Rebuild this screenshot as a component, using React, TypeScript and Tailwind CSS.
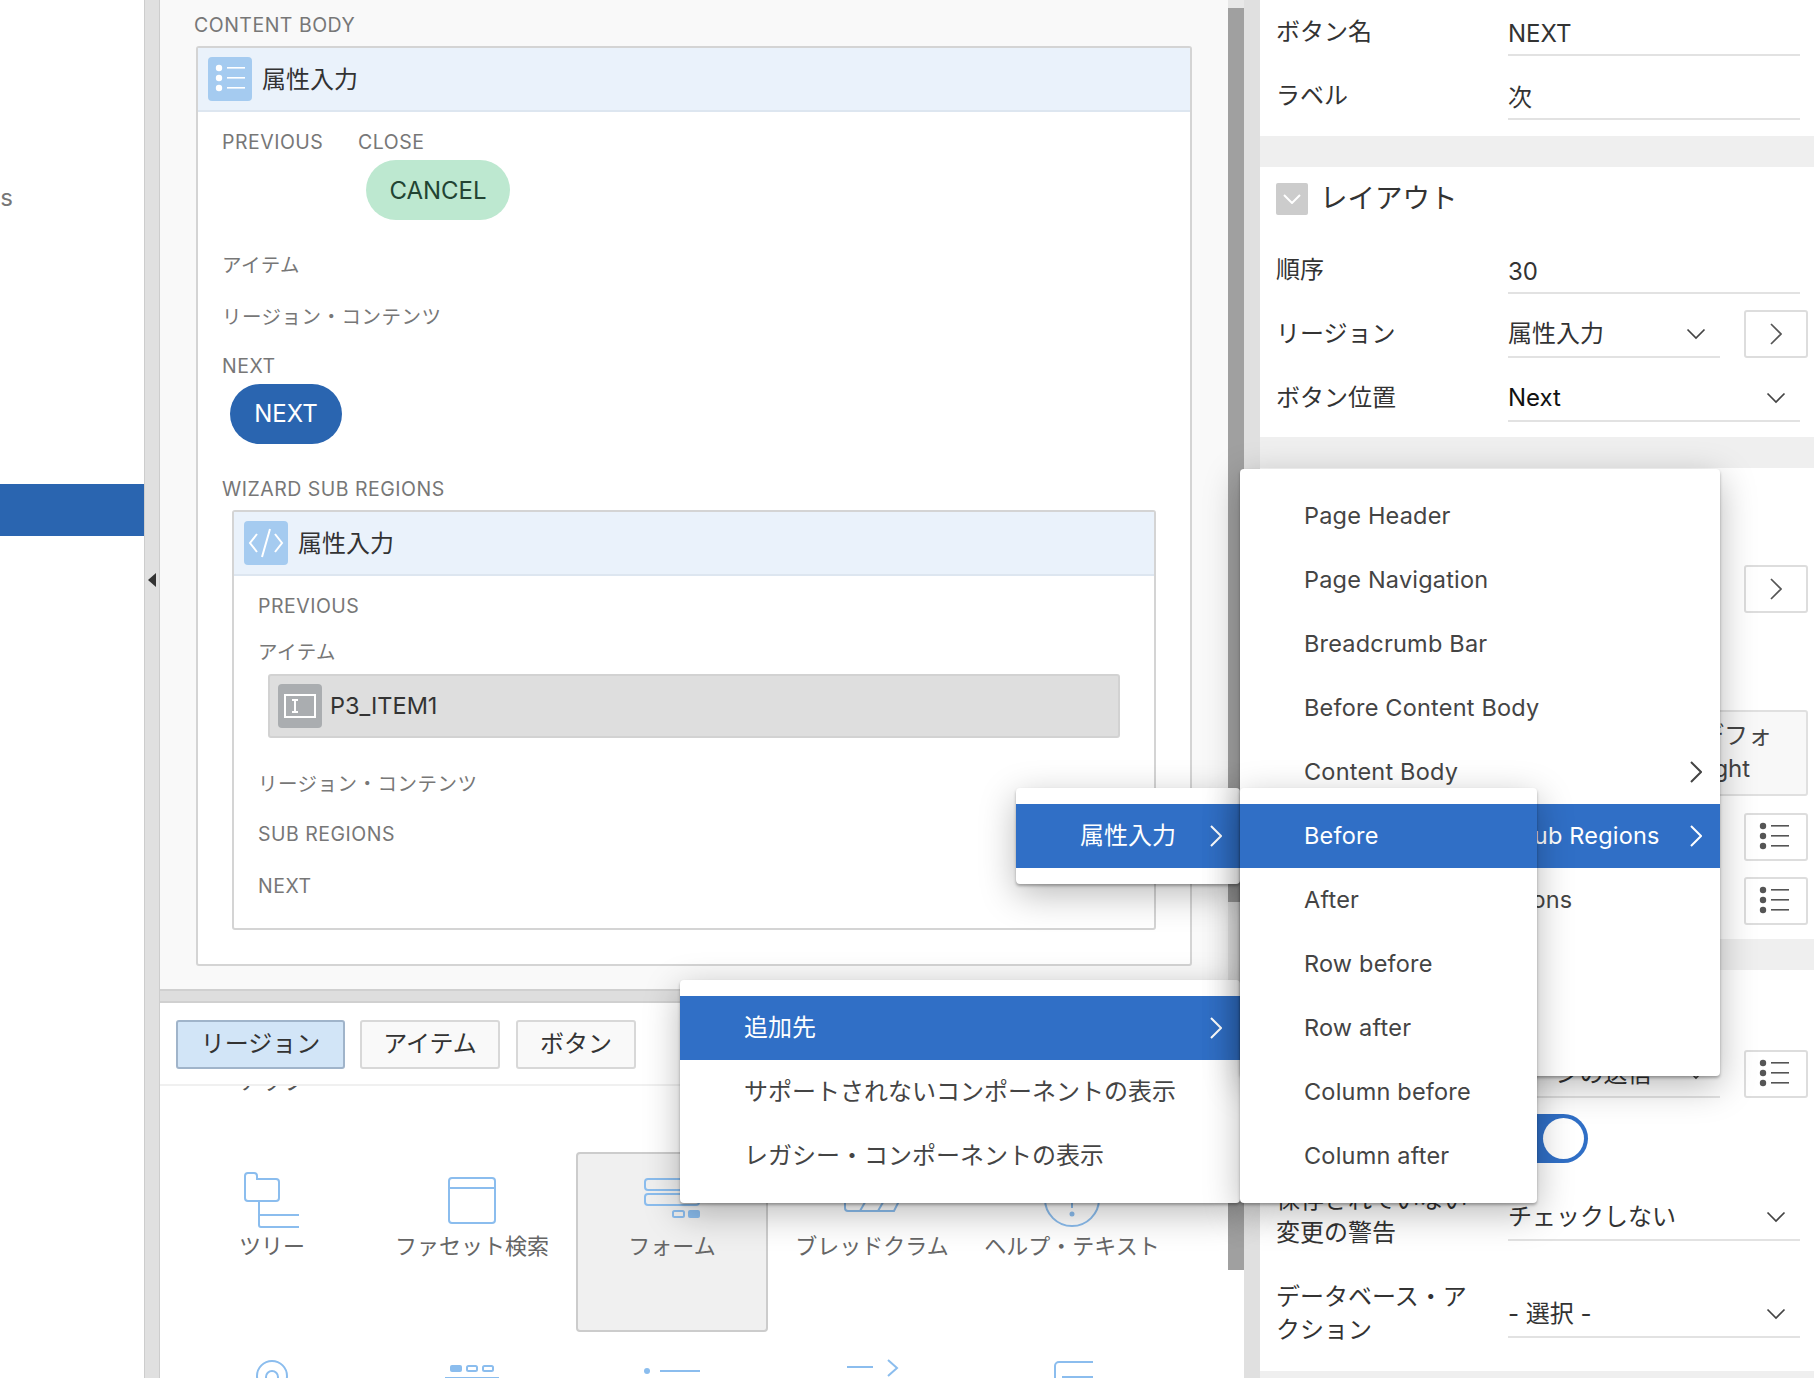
import React from 'react';

const Chev = ({ c = '#555', w = 2 }: { c?: string; w?: number }) => (
  <svg width="12" height="22" viewBox="0 0 12 22" fill="none" stroke={c} strokeWidth={w}>
    <path d="M1 1 L11 11 L1 21" />
  </svg>
);

const ChevDown = ({ c = '#444' }: { c?: string }) => (
  <svg width="20" height="12" viewBox="0 0 20 12" fill="none" stroke={c} strokeWidth="1.7">
    <path d="M1.5 1.5 L10 10 L18.5 1.5" />
  </svg>
);

const ListGlyph = ({ c = '#555' }: { c?: string }) => (
  <svg width="44" height="44" viewBox="0 0 44 44" fill={c} stroke="none">
    <circle cx="11" cy="11" r="3.2" />
    <circle cx="11" cy="21" r="3.2" />
    <circle cx="11" cy="31" r="3.2" />
    <rect x="19" y="10" width="18" height="1.6" />
    <rect x="19" y="20" width="18" height="1.6" />
    <rect x="19" y="30" width="18" height="1.6" />
  </svg>
);

const Lbl = ({ children, className = '' }: { children: React.ReactNode; className?: string }) => (
  <div className={`h-[24px] pt-[1px] leading-[24px] text-[19.5px] tracking-[0.5px] text-[#777] whitespace-nowrap ${className}`}>{children}</div>
);

const RegionHead = ({ icon, title }: { icon: React.ReactNode; title: string }) => (
  <div className="h-[64px] bg-[#eaf2fb] border-b-2 border-[#dde6f0] flex items-center pl-[10px]">
    <div className="w-[44px] h-[44px] rounded-[4px] bg-[#a5cbf0] flex items-center justify-center">{icon}</div>
    <span className="ml-[10px] pt-[2px] text-[24px] text-[#333]">{title}</span>
  </div>
);

const Field = ({ label, children, h = 'h-[64px]', w = 'w-[292px]', dark = false, arrow = false, btn }: { label?: React.ReactNode; children?: React.ReactNode; h?: string; w?: string; dark?: boolean; arrow?: boolean; btn?: React.ReactNode }) => (
  <div className={`${h} shrink-0 flex items-end pl-[16px]`}>
    <div className="w-[232px] h-[48px] pb-[2px] flex items-center text-[24px] leading-[33px] text-[#333] whitespace-nowrap">{label}</div>
    <div className={`${w} h-[48px] border-b-2 border-[#e2e2e2] flex items-center justify-between text-[24px] ${arrow ? 'pt-[2px]' : 'pt-[5px]'} ${dark ? 'text-[#111]' : 'text-[#333]'}`}>
      <span>{children}</span>
      {arrow && <span className="mr-[14px] flex"><ChevDown /></span>}
    </div>
    {btn}
  </div>
);

const SideBtn = ({ children, className = '' }: { children: React.ReactNode; className?: string }) => (
  <div className={`w-[64px] h-[48px] bg-white border-2 border-[#ddd] rounded-[3px] flex items-center justify-center ${className}`}>{children}</div>
);

const ListBtn = ({ className = '' }: { className?: string }) => (
  <SideBtn className={className}>
    <span className="flex -translate-x-[2px]"><ListGlyph /></span>
  </SideBtn>
);

const Menu = ({ items, className }: { items: { t: string; on?: boolean; sub?: boolean; ja?: boolean }[]; className: string }) => (
  <div className={`absolute bg-white rounded-[4px] shadow-[0_2px_3px_rgba(0,0,0,0.3),0_10px_36px_rgba(0,0,0,0.28)] ${className}`}>
    {items.map((it) => (
      <div key={it.t} className={`h-[64px] flex items-center justify-between whitespace-nowrap ${it.on ? 'bg-[#306fc6] text-white' : 'text-[#444]'}`}>
        <span className={it.ja ? 'text-[24px]' : 'text-[23.5px] tracking-[0.2px]'}>{it.t}</span>
        {it.sub && <span className="flex"><Chev c={it.on ? '#fff' : '#444'} /></span>}
      </div>
    ))}
  </div>
);

const stroke = '#8bbdee';

const TreeIcon = () => (
  <svg width="60" height="56" viewBox="0 0 60 56" fill="none" stroke={stroke} strokeWidth="2" overflow="visible">
    <path d="M3 4 a3 3 0 0 1 3-3 h6 a3 3 0 0 1 3 3 v3 h19 a3 3 0 0 1 3 3 v16 a3 3 0 0 1-3 3 h-28 a3 3 0 0 1-3-3 z" />
    <path d="M17 29 v24 a2 2 0 0 0 2 2 h38 M17 43 h40" />
  </svg>
);

const FacetIcon = () => (
  <svg width="60" height="56" viewBox="0 0 60 56" fill="none" stroke={stroke} strokeWidth="2" overflow="visible">
    <rect x="7" y="6" width="46" height="45" rx="3" />
    <path d="M7 16 h46" />
  </svg>
);

const FormIcon = () => (
  <svg width="60" height="56" viewBox="0 0 60 56" fill="none" stroke={stroke} strokeWidth="2" overflow="visible">
    <rect x="3" y="7" width="54" height="11" rx="3" />
    <rect x="3" y="22" width="54" height="11" rx="3" />
    <rect x="31" y="39" width="11" height="6" rx="1.5" />
    <rect x="46" y="38" width="12" height="8" rx="2" fill={stroke} stroke="none" />
  </svg>
);

const CrumbIcon = () => (
  <svg width="60" height="56" viewBox="0 0 60 56" fill="none" stroke={stroke} strokeWidth="2" overflow="visible">
    <path d="M3 22 v14 a3 3 0 0 0 3 3 h46 l6-12 M18 39 l8-14 M36 39 l8-14" />
  </svg>
);

const HelpIcon = () => (
  <svg width="60" height="56" viewBox="0 0 60 56" fill="none" stroke={stroke} strokeWidth="2" overflow="visible">
    <circle cx="30" cy="27" r="27" />
    <path d="M30 31 v5" />
    <circle cx="30" cy="42" r="1.5" fill={stroke} />
  </svg>
);

const TargetIcon = () => (
  <svg width="60" height="56" viewBox="0 0 60 56" fill="none" stroke={stroke} strokeWidth="2" overflow="visible">
    <circle cx="30" cy="16" r="15" />
    <circle cx="30" cy="17" r="6" />
  </svg>
);

const TabsIcon = () => (
  <svg width="60" height="56" viewBox="0 0 60 56" fill="none" stroke={stroke} strokeWidth="2" overflow="visible">
    <rect x="8" y="5" width="12" height="7" rx="2" fill={stroke} stroke="none" />
    <rect x="25" y="6" width="10" height="5" rx="1.5" />
    <rect x="41" y="6" width="10" height="5" rx="1.5" />
    <path d="M3 18 h54" />
  </svg>
);

const DotLineIcon = () => (
  <svg width="60" height="56" viewBox="0 0 60 56" fill="none" stroke={stroke} strokeWidth="2" overflow="visible">
    <circle cx="5" cy="11" r="3" fill={stroke} stroke="none" />
    <path d="M18 11 h40" />
  </svg>
);

const NextIcon = () => (
  <svg width="60" height="56" viewBox="0 0 60 56" fill="none" stroke={stroke} strokeWidth="2" overflow="visible">
    <path d="M5 7 h26 M46 0 l9 8 l-9 8" />
  </svg>
);

const CardIcon = () => (
  <svg width="60" height="56" viewBox="0 0 60 56" fill="none" stroke={stroke} strokeWidth="2" overflow="visible">
    <path d="M13 20 v-14 a4 4 0 0 1 4-4 h34 M20 17 h31" />
  </svg>
);

const cells = [
  { t: 'ツリー', icon: <TreeIcon /> },
  { t: 'ファセット検索', icon: <FacetIcon /> },
  { t: 'フォーム', icon: <FormIcon />, on: true },
  { t: 'ブレッドクラム', icon: <CrumbIcon /> },
  { t: 'ヘルプ・テキスト', icon: <HelpIcon /> },
  { t: '', icon: <TargetIcon /> },
  { t: '', icon: <TabsIcon /> },
  { t: '', icon: <DotLineIcon /> },
  { t: '', icon: <NextIcon /> },
  { t: '', icon: <CardIcon /> },
];

export default function App() {
  return (
    <div className="relative w-[1814px] h-[1378px] overflow-hidden flex bg-white font-[Inter,'Noto_Sans_CJK_JP',sans-serif]">
      {/* left nav */}
      <div className="w-[144px] shrink-0 overflow-hidden">
        <div className="mt-[182px] h-[32px] leading-[32px] -ml-[67px] w-[80px] text-right text-[24px] text-[#777]">Items</div>
        <div className="mt-[270px] h-[52px] bg-[#2a65b0]" />
      </div>
      <div className="w-[16px] shrink-0 bg-[#e0e0e0] border-x border-[#cdcdcd] flex items-start justify-center">
        <div className="mt-[573px] w-0 h-0 border-y-[7px] border-y-transparent border-r-[8px] border-r-[#333]" />
      </div>

      {/* center */}
      <div className="w-[1084px] shrink-0 flex flex-col">
        <div className="h-[989px] flex">
          <div className="w-[1068px] bg-[#f9f9f9] pt-[12px]">
            <Lbl className="ml-[34px]">CONTENT BODY</Lbl>
            <div className="mt-[10px] ml-[36px] w-[996px] h-[920px] border-2 border-[#d4d4d4] rounded-[3px] bg-white">
              <RegionHead
                title="属性入力"
                icon={<ListGlyph c="#fff" />}
              />
              <div className="pl-[24px] pt-[17px]">
                <div className="flex">
                  <Lbl className="w-[136px]">PREVIOUS</Lbl>
                  <div>
                    <Lbl>CLOSE</Lbl>
                    <div className="mt-[7px] ml-[8px] w-[144px] h-[60px] pt-[1px] rounded-full bg-[#bde8d0] flex items-center justify-center text-[24px] text-[#243]">CANCEL</div>
                  </div>
                </div>
                <Lbl className="mt-[32px]">アイテム</Lbl>
                <Lbl className="mt-[28px]">リージョン・コンテンツ</Lbl>
                <Lbl className="mt-[25px]">NEXT</Lbl>
                <div className="mt-[7px] ml-[8px] w-[112px] h-[60px] rounded-full bg-[#2a65b0] flex items-center justify-center text-[24px] text-white">NEXT</div>
                <Lbl className="mt-[32px]">WIZARD SUB REGIONS</Lbl>
                <div className="mt-[10px] ml-[10px] w-[924px] h-[420px] border-2 border-[#d4d4d4] rounded-[3px] bg-white">
                  <RegionHead
                    title="属性入力"
                    icon={
                      <svg width="44" height="44" viewBox="0 0 44 44" fill="none" stroke="#fff" strokeWidth="2">
                        <path d="M13 13 L6 22 L13 31 M31 13 L38 22 L31 31 M26 8 L18 36" />
                      </svg>
                    }
                  />
                  <div className="pl-[24px] pt-[17px]">
                    <Lbl>PREVIOUS</Lbl>
                    <Lbl className="mt-[22px]">アイテム</Lbl>
                    <div className="mt-[11px] ml-[10px] w-[852px] h-[64px] bg-[#dedede] border-2 border-[#d2d2d2] rounded-[3px] flex items-center pl-[8px]">
                      <div className="w-[44px] h-[44px] rounded-[4px] bg-[#aaadb0] flex items-center justify-center">
                        <svg width="32" height="24" viewBox="0 0 32 24" fill="none" stroke="#fff" strokeWidth="2">
                          <rect x="1" y="1" width="30" height="22" />
                          <path d="M8 6 h6 M8 18 h6 M11 6 v12" />
                        </svg>
                      </div>
                      <span className="ml-[8px] text-[23.5px] text-[#333]">P3_ITEM1</span>
                    </div>
                    <Lbl className="mt-[33px]">リージョン・コンテンツ</Lbl>
                    <Lbl className="mt-[26px]">SUB REGIONS</Lbl>
                    <Lbl className="mt-[28px]">NEXT</Lbl>
                  </div>
                </div>
              </div>
            </div>
          </div>
          <div className="w-[16px] bg-[#e8e8e8] pt-[8px]">
            <div className="h-[894px] bg-[#a0a0a0]" />
          </div>
        </div>

        <div className="h-[14px] bg-[#dedede] border-y-2 border-[#d0d0d0]" />

        <div className="flex-1 flex overflow-hidden">
          <div className="w-[1068px] overflow-hidden">
            <div className="h-[83px] border-b-2 border-[#f0f0f0] flex items-start pt-[17px] pl-[16px] text-[24px] text-[#333]">
              <div className="w-[169px] h-[49px] pb-[2px] rounded-[3px] bg-[#d2e5f7] border-2 border-[#a0b4ca] flex items-center justify-center">リージョン</div>
              <div className="ml-[15px] w-[140px] h-[49px] pb-[2px] rounded-[3px] bg-[#f9f9f9] border-2 border-[#d8d8d8] flex items-center justify-center">アイテム</div>
              <div className="ml-[16px] w-[120px] h-[49px] pb-[2px] rounded-[3px] bg-[#f9f9f9] border-2 border-[#d8d8d8] flex items-center justify-center">ボタン</div>
            </div>
            <div className="h-[66px] overflow-hidden pl-[12px]">
              <div className="-mt-[21px] w-[200px] text-center text-[22px] leading-[32px] text-[#555]">アップ</div>
            </div>
            <div className="grid grid-cols-[repeat(5,200px)] pl-[12px] auto-rows-[188px]">
              {cells.map((c, i) => (
                <div
                  key={i}
                  className={`mx-[4px] h-[180px] rounded-[4px] border-2 pt-[18px] flex flex-col items-center ${c.on ? 'bg-[#f0f0f0] border-[#ccc]' : 'border-transparent'}`}
                >
                  <div className="h-[56px]">{c.icon}</div>
                  <div className="mt-[2px] text-[22px] leading-[32px] text-[#666] whitespace-nowrap">{c.t}</div>
                </div>
              ))}
            </div>
          </div>
          <div className="w-[16px]">
            <div className="h-[267px] bg-[#a0a0a0]" />
          </div>
        </div>
      </div>

      <div className="w-[16px] shrink-0 bg-[#e0e0e0]" />

      {/* right panel */}
      <div className="flex-1 flex flex-col">
        <Field h="h-[56px]" label="ボタン名">NEXT</Field>
        <Field label="ラベル">次</Field>
        <div className="h-[16px] shrink-0" />
        <div className="h-[31px] shrink-0 bg-[#efefef]" />

        <div className="h-[63px] shrink-0 flex items-center pl-[16px]">
          <div className="w-[32px] h-[32px] bg-[#ccc] rounded-[2px] flex items-center justify-center">
            <svg width="18" height="10" viewBox="0 0 18 10" fill="none" stroke="#fff" strokeWidth="2"><path d="M1 1 L9 9 L17 1" /></svg>
          </div>
          <span className="ml-[12px] text-[27.5px] text-[#333]">レイアウト</span>
        </div>
        <Field label="順序">30</Field>
        <Field
          label="リージョン"
          w="w-[212px]"
          arrow
          btn={<SideBtn className="ml-[24px]"><Chev w={1.7} /></SideBtn>}
        >
          属性入力
        </Field>
        <Field label="ボタン位置" arrow dark>Next</Field>
        <div className="h-[15px] shrink-0" />
        <div className="h-[31px] shrink-0 bg-[#efefef]" />

        <div className="h-[471px] shrink-0 flex flex-col items-end pr-[6px] pt-[97px]">
          <SideBtn><Chev w={1.7} /></SideBtn>
          <div className="mt-[97px] w-[120px] h-[86px] bg-[#f8f8f8] border-2 border-[#e0e0e0] rounded-[3px] text-[24px] leading-[33px] text-[#444] py-[7px] pl-[10px] whitespace-nowrap">
            デフォ<br /><span className="-ml-[6px]">Light</span>
          </div>
          <ListBtn className="mt-[17px]" />
          <ListBtn className="mt-[16px]" />
        </div>
        <div className="h-[31px] shrink-0 bg-[#efefef]" />

        <div className="h-[64px] shrink-0" />
        <Field
          label="ボタン"
          w="w-[212px]"
          arrow
          btn={<ListBtn className="ml-[24px]" />}
        >
          ページの送信
        </Field>
        <div className="h-[78px] shrink-0 pl-[248px] pt-[16px]">
          <div className="w-[80px] h-[49px] rounded-full bg-[#306fc6] flex items-center justify-end pr-[4px]">
            <div className="w-[41px] h-[41px] rounded-full bg-white" />
          </div>
        </div>
        <Field h="h-[65px]" label={<div>保存されていない<br />変更の警告</div>} arrow>チェックしない</Field>
        <Field h="h-[97px]" label={<div>データベース・ア<br />クション</div>} arrow>- 選択 -</Field>
        <div className="flex-1 min-h-[33px]" />
        <div className="h-[7px] shrink-0 bg-[#efefef]" />
      </div>

      {/* context menus */}
      <Menu
        className="left-[680px] top-[980px] w-[560px] pt-[16px] pb-[15px] [&>div]:pl-[64px] [&>div]:pr-[18px]"
        items={[
          { t: '追加先', on: true, sub: true, ja: true },
          { t: 'サポートされないコンポーネントの表示', ja: true },
          { t: 'レガシー・コンポーネントの表示', ja: true },
        ]}
      />
      <Menu
        className="left-[1016px] top-[788px] w-[224px] pt-[16px] pb-[16px] [&>div]:pl-[64px] [&>div]:pr-[18px]"
        items={[{ t: '属性入力', on: true, sub: true, ja: true }]}
      />
      <Menu
        className="left-[1240px] top-[469px] w-[480px] h-[607px] pt-[15px] [&>div]:pl-[64px] [&>div]:pr-[18px]"
        items={[
          { t: 'Page Header' },
          { t: 'Page Navigation' },
          { t: 'Breadcrumb Bar' },
          { t: 'Before Content Body' },
          { t: 'Content Body', sub: true },
          { t: "Region Template's Sub Regions", on: true, sub: true },
          { t: 'Regions Items Positions' },
        ]}
      />
      <Menu
        className="left-[1240px] top-[788px] w-[297px] pt-[16px] pb-[15px] [&>div]:pl-[64px]"
        items={[
          { t: 'Before', on: true },
          { t: 'After' },
          { t: 'Row before' },
          { t: 'Row after' },
          { t: 'Column before' },
          { t: 'Column after' },
        ]}
      />
    </div>
  );
}
